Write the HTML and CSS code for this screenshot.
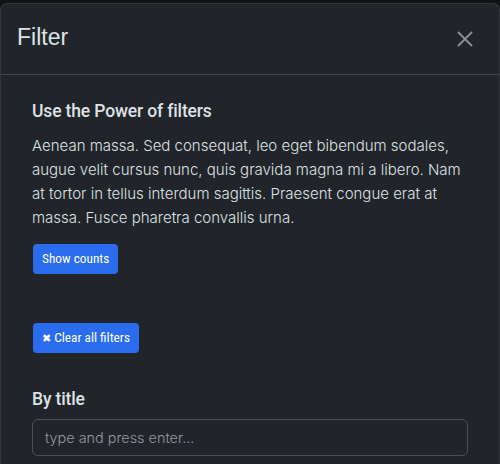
FILE: index.html
```html
<!DOCTYPE html>
<html lang="en">
<head>
<meta charset="utf-8">
<title>Filter</title>
<link rel="stylesheet" href="styles.css">
</head>
<body>
<div class="panel">
  <div class="panel-header">
    <h2 class="panel-title">Filter</h2>
    <button class="btn-close" type="button" aria-label="Close">
      <svg width="16" height="16" viewBox="0 0 16 16"><path d="M1 1 L15 15 M15 1 L1 15" stroke="#8c8f93" stroke-width="1.8" fill="none"/></svg>
    </button>
  </div>
  <div class="panel-body">
    <h3 class="section-title">Use the Power of filters</h3>
    <p class="intro">Aenean massa. Sed consequat, leo eget bibendum sodales, augue velit cursus nunc, quis gravida magna mi a libero. Nam at tortor in tellus interdum sagittis. Praesent congue erat at massa. Fusce pharetra convallis urna.</p>
    <button class="btn" type="button">Show counts</button>
    <button class="btn btn-clear" type="button"><span class="x">✖</span> Clear all filters</button>
    <h3 class="section-title label">By title</h3>
    <input class="field" type="text" placeholder="type and press enter...">
  </div>
</div>
</body>
</html>
```
FILE: styles.css
```css
html, body {
  margin: 0;
  padding: 0;
  height: 100%;
  overflow: hidden;
}
body {
  background: #111213;
  padding-top: 3px;
  box-sizing: border-box;
}
.panel {
  background: #212529;
  border: 1px solid #34383d;
  border-bottom: none;
  border-radius: 7px 7px 0 0;
  height: 100%;
  box-sizing: border-box;
  color: #dee2e6;
}
.panel-header {
  display: flex;
  align-items: flex-start;
  height: 71px;
  box-sizing: border-box;
  border-bottom: 1px solid #43484d;
  padding: 0 26px 0 16px;
}
.panel-title {
  margin: 20px 0 0 0;
  font-family: "Liberation Sans", Arial, sans-serif;
  font-weight: 400;
  font-size: 23px;
  line-height: 1.2;
  color: #dee2e6;
}
.btn-close {
  margin: 27px 0 0 auto;
  padding: 0;
  border: 0;
  background: transparent;
  width: 16px;
  height: 16px;
  display: block;
}
.btn-close svg { display: block; }
.panel-body {
  padding: 26px 31px 0 31px;
  display: flex;
  flex-direction: column;
  align-items: flex-start;
}
.section-title {
  margin: 0 0 11px 0;
  font-family: Roboto, "Liberation Sans", sans-serif;
  font-weight: 500;
  font-size: 17.5px;
  letter-spacing: -0.15px;
  line-height: 21.6px;
  color: #dee2e6;
}
.intro {
  margin: 0 0 14px 0;
  font-family: Inter, "Noto Sans", sans-serif;
  font-weight: 300;
  font-size: 15px;
  line-height: 24px;
  color: #dee2e6;
}
.btn {
  margin-left: 1px;
  height: 30px;
  padding: 0 9px;
  border: 0;
  border-radius: 4px;
  background: #2b6cee;
  color: #ffffff;
  font-family: "Liberation Sans Narrow", "Roboto Condensed", "DejaVu Sans Condensed", sans-serif;
  font-size: 13.3px;
  line-height: 30px;
  white-space: nowrap;
}
.btn-clear {
  margin-top: 49px;
  padding: 0 9px 0 9px;
}
.btn-clear .x {
  font-family: "DejaVu Sans", sans-serif;
  font-size: 11px;
}
.label {
  margin-top: 36px;
  margin-bottom: 9px;
}
.field {
  width: 436px;
  height: 37px;
  box-sizing: border-box;
  border: 1px solid #4a4f55;
  border-radius: 6px;
  background: #212529;
  padding: 0 12px;
  font-family: Inter, "Noto Sans", sans-serif;
  font-weight: 300;
  font-size: 14.4px;
  color: #dee2e6;
}
.field::placeholder {
  color: #959a9f;
}
```
